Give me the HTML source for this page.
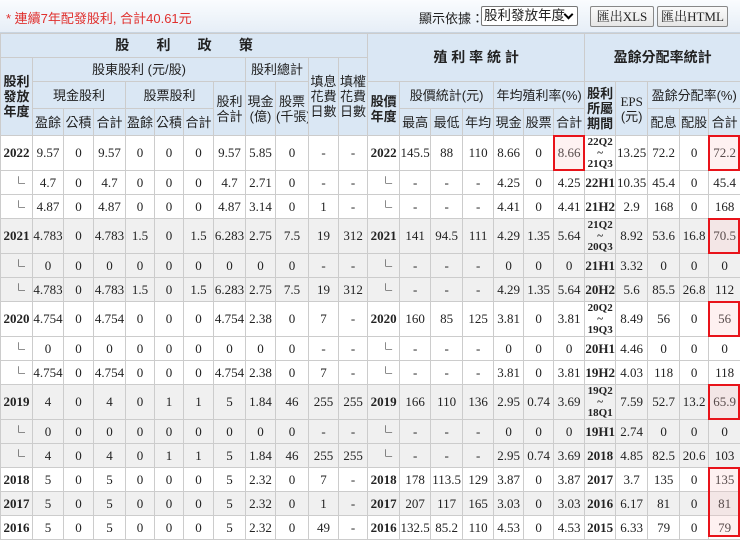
<!DOCTYPE html>
<html><head><meta charset="utf-8">
<style>
*{margin:0;padding:0;box-sizing:border-box}
body{width:740px;height:537px;overflow:hidden;background:#fff;position:relative;font-family:"Liberation Serif","Noto Serif CJK SC",serif;color:#222}
.top{position:absolute;left:0;top:0;width:740px;height:33px;background:linear-gradient(#fafcfe,#e6eef7);border-bottom:1px solid #c8d4e0}
.top .msg{position:absolute;left:6px;top:8px;font:13px "Liberation Sans","Noto Sans CJK TC",sans-serif;color:#e0302e}
.top .lab{position:absolute;left:419px;top:8px;font:13px "Liberation Sans","Noto Sans CJK TC",sans-serif;color:#222;white-space:nowrap}
.sel{position:absolute;left:481px;top:6px;width:97px;height:20px;border:1px solid #777;border-radius:2px;background:#fff;font:13.5px "Liberation Sans","Noto Sans CJK TC",sans-serif;padding-left:2px;line-height:18px;white-space:nowrap;overflow:hidden;padding-right:14px}
.sel:after{content:"";position:absolute;right:5px;top:4px;width:5px;height:5px;border-right:2px solid #000;border-bottom:2px solid #000;transform:rotate(45deg)}
.btn{position:absolute;top:6px;height:21px;border:1px solid #888;border-radius:2px;background:linear-gradient(#fafafa,#e6e6e6);font:13px "Liberation Serif","Noto Serif CJK TC",serif;text-align:center;line-height:19px}
table{position:absolute;left:0;top:33px;border-collapse:collapse;table-layout:fixed;width:740px}
td,th{border:1px solid #ccc;text-align:center;font-size:13px;padding:0;overflow:hidden;white-space:nowrap}
th{background:#dae7f4;font-weight:normal;font-family:"Liberation Sans","Noto Sans CJK TC",sans-serif;font-size:13px;line-height:15px;color:#222}
th.big{font-weight:bold;font-size:14px}
th.b{font-weight:bold}
td.y{font-weight:bold}
td.c{text-align:right;padding-right:7px;font-family:"Noto Sans CJK TC",sans-serif;font-size:13px;color:#222}
td.p{font-weight:bold;font-size:11px;line-height:11px}
tr.g td{background:#f0f0f0}
tr.m{height:35px}
tr.s{height:24px}
.rb{position:absolute;border:2px solid #e8131a;background:rgba(250,200,200,.25)}
</style></head><body>
<div class="top">
<div class="msg">* 連續7年配發股利, 合計40.61元</div>
<div class="lab">顯示依據：</div>
<div class="sel">股利發放年度</div>
<div class="btn" style="left:590px;width:64px">匯出XLS</div>
<div class="btn" style="left:657px;width:71px">匯出HTML</div>
</div>
<table>
<colgroup>
<col style="width:32px"><col style="width:31px"><col style="width:30px"><col style="width:32px"><col style="width:29px"><col style="width:29px"><col style="width:30px"><col style="width:32px"><col style="width:30px"><col style="width:33px"><col style="width:30px"><col style="width:29px">
<col style="width:32px"><col style="width:31px"><col style="width:32px"><col style="width:31px"><col style="width:30px"><col style="width:30px"><col style="width:31px"><col style="width:31px"><col style="width:32px"><col style="width:32px"><col style="width:29px"><col style="width:32px">
</colgroup>
<tr style="height:24px"><th colspan="12" class="big">股&nbsp;&nbsp;&nbsp;&nbsp;&nbsp;&nbsp;&nbsp;利&nbsp;&nbsp;&nbsp;&nbsp;&nbsp;&nbsp;&nbsp;政&nbsp;&nbsp;&nbsp;&nbsp;&nbsp;&nbsp;&nbsp;策</th><th colspan="7" rowspan="2" class="big">殖 利 率 統 計</th><th colspan="5" rowspan="2" class="big">盈餘分配率統計</th></tr>
<tr style="height:24px"><th rowspan="3" class="b">股利<br>發放<br>年度</th><th colspan="7">股東股利 (元/股)</th><th colspan="2">股利總計</th><th rowspan="3">填息<br>花費<br>日數</th><th rowspan="3">填權<br>花費<br>日數</th></tr>
<tr style="height:27px"><th colspan="3">現金股利</th><th colspan="3">股票股利</th><th rowspan="2">股利<br>合計</th><th rowspan="2">現金<br>(億)</th><th rowspan="2">股票<br>(千張)</th><th rowspan="2" class="b">股價<br>年度</th><th colspan="3">股價統計(元)</th><th colspan="3">年均殖利率(%)</th><th rowspan="2" class="b">股利<br>所屬<br>期間</th><th rowspan="2"><span style="font-family:'Liberation Serif'">EPS</span><br>(元)</th><th colspan="3">盈餘分配率(%)</th></tr>
<tr style="height:27px"><th>盈餘</th><th>公積</th><th>合計</th><th>盈餘</th><th>公積</th><th>合計</th><th>最高</th><th>最低</th><th>年均</th><th>現金</th><th>股票</th><th>合計</th><th>配息</th><th>配股</th><th>合計</th></tr>

<tr class="m"><td class="y">2022</td><td>9.57</td><td>0</td><td>9.57</td><td>0</td><td>0</td><td>0</td><td>9.57</td><td>5.85</td><td>0</td><td>-</td><td>-</td><td class="y">2022</td><td>145.5</td><td>88</td><td>110</td><td>8.66</td><td>0</td><td>8.66</td><td class="p">22Q2<br>~<br>21Q3</td><td>13.25</td><td>72.2</td><td>0</td><td>72.2</td></tr>
<tr class="s"><td class="c">└</td><td>4.7</td><td>0</td><td>4.7</td><td>0</td><td>0</td><td>0</td><td>4.7</td><td>2.71</td><td>0</td><td>-</td><td>-</td><td class="c">└</td><td>-</td><td>-</td><td>-</td><td>4.25</td><td>0</td><td>4.25</td><td class="y">22H1</td><td>10.35</td><td>45.4</td><td>0</td><td>45.4</td></tr>
<tr class="s"><td class="c">└</td><td>4.87</td><td>0</td><td>4.87</td><td>0</td><td>0</td><td>0</td><td>4.87</td><td>3.14</td><td>0</td><td>1</td><td>-</td><td class="c">└</td><td>-</td><td>-</td><td>-</td><td>4.41</td><td>0</td><td>4.41</td><td class="y">21H2</td><td>2.9</td><td>168</td><td>0</td><td>168</td></tr>

<tr class="m g"><td class="y">2021</td><td>4.783</td><td>0</td><td>4.783</td><td>1.5</td><td>0</td><td>1.5</td><td>6.283</td><td>2.75</td><td>7.5</td><td>19</td><td>312</td><td class="y">2021</td><td>141</td><td>94.5</td><td>111</td><td>4.29</td><td>1.35</td><td>5.64</td><td class="p">21Q2<br>~<br>20Q3</td><td>8.92</td><td>53.6</td><td>16.8</td><td>70.5</td></tr>
<tr class="s g"><td class="c">└</td><td>0</td><td>0</td><td>0</td><td>0</td><td>0</td><td>0</td><td>0</td><td>0</td><td>0</td><td>-</td><td>-</td><td class="c">└</td><td>-</td><td>-</td><td>-</td><td>0</td><td>0</td><td>0</td><td class="y">21H1</td><td>3.32</td><td>0</td><td>0</td><td>0</td></tr>
<tr class="s g"><td class="c">└</td><td>4.783</td><td>0</td><td>4.783</td><td>1.5</td><td>0</td><td>1.5</td><td>6.283</td><td>2.75</td><td>7.5</td><td>19</td><td>312</td><td class="c">└</td><td>-</td><td>-</td><td>-</td><td>4.29</td><td>1.35</td><td>5.64</td><td class="y">20H2</td><td>5.6</td><td>85.5</td><td>26.8</td><td>112</td></tr>

<tr class="m"><td class="y">2020</td><td>4.754</td><td>0</td><td>4.754</td><td>0</td><td>0</td><td>0</td><td>4.754</td><td>2.38</td><td>0</td><td>7</td><td>-</td><td class="y">2020</td><td>160</td><td>85</td><td>125</td><td>3.81</td><td>0</td><td>3.81</td><td class="p">20Q2<br>~<br>19Q3</td><td>8.49</td><td>56</td><td>0</td><td>56</td></tr>
<tr class="s"><td class="c">└</td><td>0</td><td>0</td><td>0</td><td>0</td><td>0</td><td>0</td><td>0</td><td>0</td><td>0</td><td>-</td><td>-</td><td class="c">└</td><td>-</td><td>-</td><td>-</td><td>0</td><td>0</td><td>0</td><td class="y">20H1</td><td>4.46</td><td>0</td><td>0</td><td>0</td></tr>
<tr class="s"><td class="c">└</td><td>4.754</td><td>0</td><td>4.754</td><td>0</td><td>0</td><td>0</td><td>4.754</td><td>2.38</td><td>0</td><td>7</td><td>-</td><td class="c">└</td><td>-</td><td>-</td><td>-</td><td>3.81</td><td>0</td><td>3.81</td><td class="y">19H2</td><td>4.03</td><td>118</td><td>0</td><td>118</td></tr>

<tr class="m g"><td class="y">2019</td><td>4</td><td>0</td><td>4</td><td>0</td><td>1</td><td>1</td><td>5</td><td>1.84</td><td>46</td><td>255</td><td>255</td><td class="y">2019</td><td>166</td><td>110</td><td>136</td><td>2.95</td><td>0.74</td><td>3.69</td><td class="p">19Q2<br>~<br>18Q1</td><td>7.59</td><td>52.7</td><td>13.2</td><td>65.9</td></tr>
<tr class="s g"><td class="c">└</td><td>0</td><td>0</td><td>0</td><td>0</td><td>0</td><td>0</td><td>0</td><td>0</td><td>0</td><td>-</td><td>-</td><td class="c">└</td><td>-</td><td>-</td><td>-</td><td>0</td><td>0</td><td>0</td><td class="y">19H1</td><td>2.74</td><td>0</td><td>0</td><td>0</td></tr>
<tr class="s g"><td class="c">└</td><td>4</td><td>0</td><td>4</td><td>0</td><td>1</td><td>1</td><td>5</td><td>1.84</td><td>46</td><td>255</td><td>255</td><td class="c">└</td><td>-</td><td>-</td><td>-</td><td>2.95</td><td>0.74</td><td>3.69</td><td class="y">2018</td><td>4.85</td><td>82.5</td><td>20.6</td><td>103</td></tr>

<tr class="s"><td class="y">2018</td><td>5</td><td>0</td><td>5</td><td>0</td><td>0</td><td>0</td><td>5</td><td>2.32</td><td>0</td><td>7</td><td>-</td><td class="y">2018</td><td>178</td><td>113.5</td><td>129</td><td>3.87</td><td>0</td><td>3.87</td><td class="y">2017</td><td>3.7</td><td>135</td><td>0</td><td>135</td></tr>
<tr class="s g"><td class="y">2017</td><td>5</td><td>0</td><td>5</td><td>0</td><td>0</td><td>0</td><td>5</td><td>2.32</td><td>0</td><td>1</td><td>-</td><td class="y">2017</td><td>207</td><td>117</td><td>165</td><td>3.03</td><td>0</td><td>3.03</td><td class="y">2016</td><td>6.17</td><td>81</td><td>0</td><td>81</td></tr>
<tr class="s"><td class="y">2016</td><td>5</td><td>0</td><td>5</td><td>0</td><td>0</td><td>0</td><td>5</td><td>2.32</td><td>0</td><td>49</td><td>-</td><td class="y">2016</td><td>132.5</td><td>85.2</td><td>110</td><td>4.53</td><td>0</td><td>4.53</td><td class="y">2015</td><td>6.33</td><td>79</td><td>0</td><td>79</td></tr>
</table>
<div class="rb" style="left:553px;top:135px;width:32px;height:36px"></div>
<div class="rb" style="left:708px;top:135px;width:32px;height:36px"></div>
<div class="rb" style="left:708px;top:218px;width:32px;height:36px"></div>
<div class="rb" style="left:708px;top:301px;width:32px;height:36px"></div>
<div class="rb" style="left:708px;top:384px;width:32px;height:36px"></div>
<div class="rb" style="left:708px;top:467px;width:32px;height:70px"></div>
</body></html>
